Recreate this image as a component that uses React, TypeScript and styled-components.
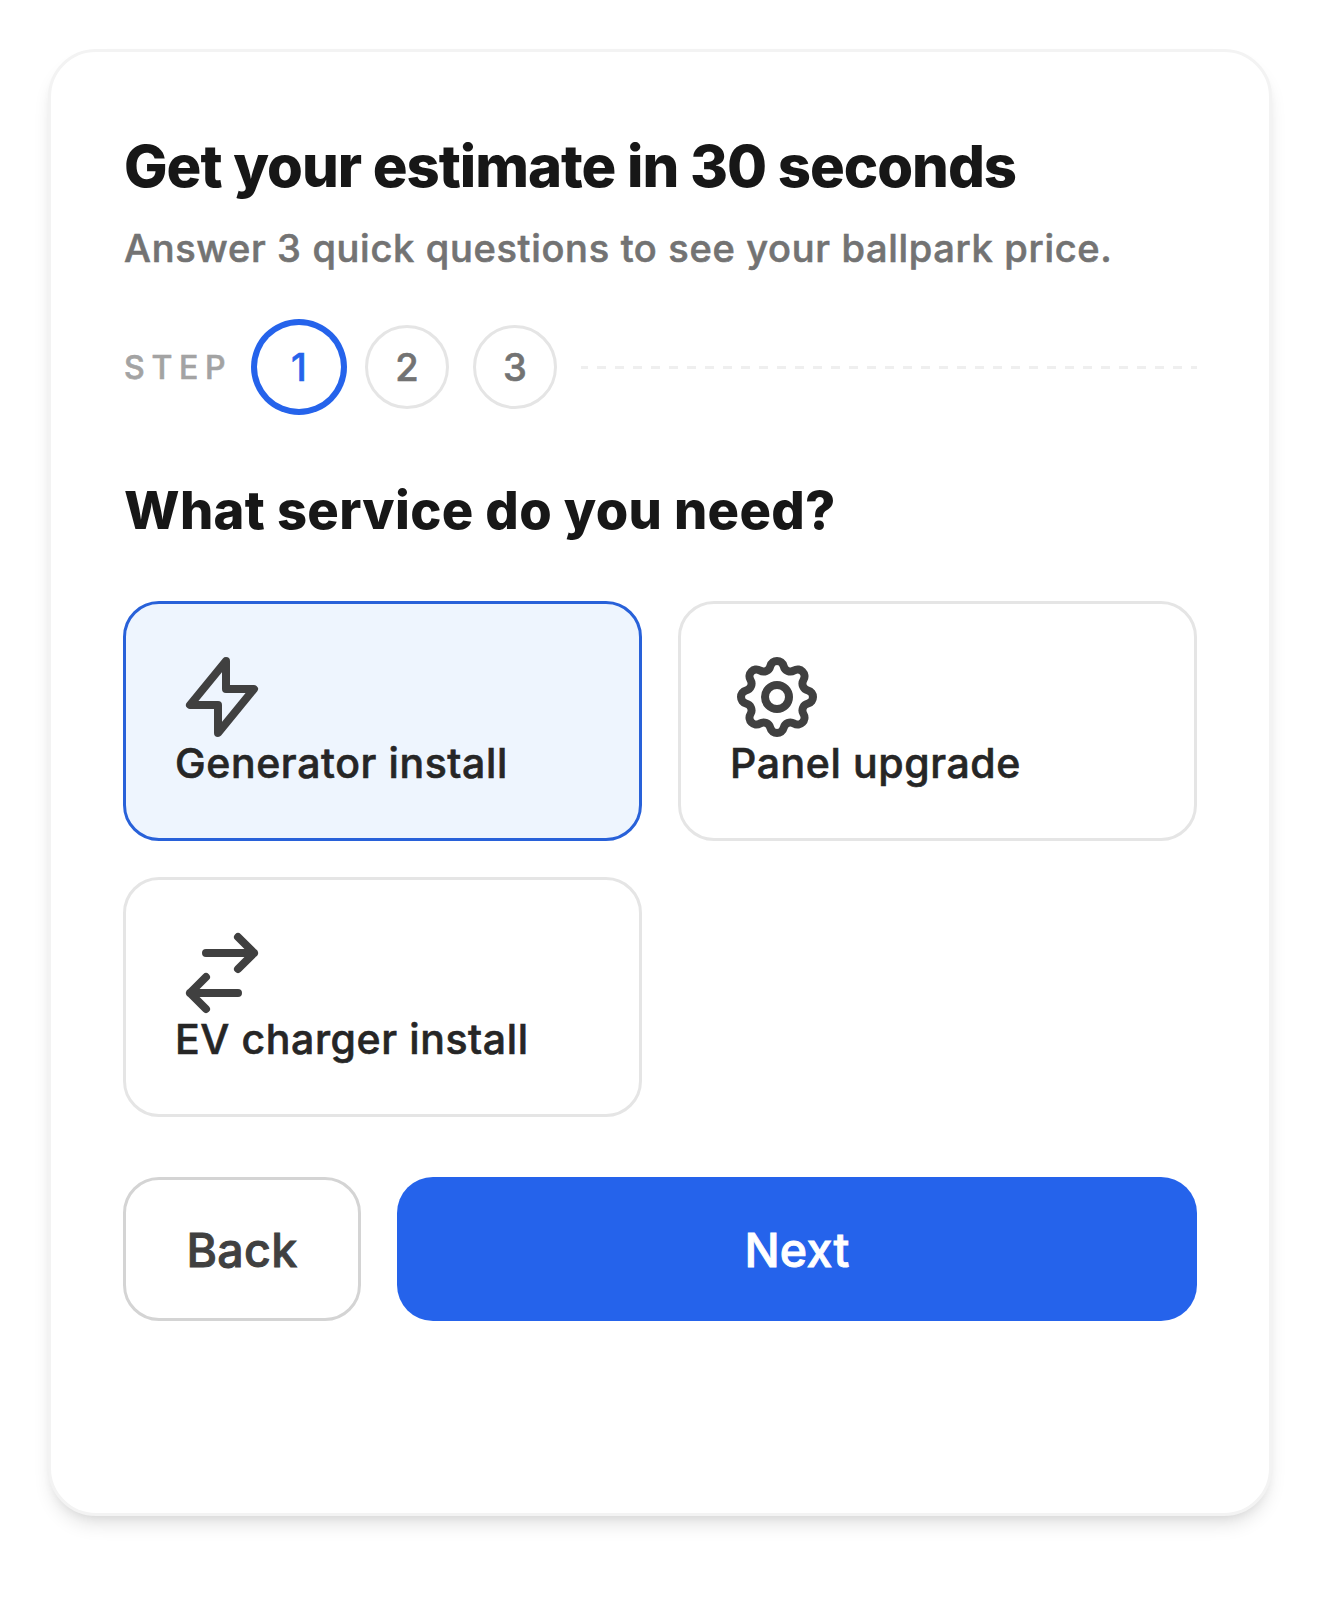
import React, { useState } from "react";
import styled, { createGlobalStyle } from "styled-components";

const GlobalStyle = createGlobalStyle`
  *, *::before, *::after { box-sizing: border-box; }
  body {
    margin: 0;
    background: #fff;
    font-family: Inter, "Liberation Sans", sans-serif;
    -webkit-font-smoothing: antialiased;
  }
  h1, h2, p { margin: 0; }
  button { font-family: inherit; cursor: pointer; }
`;

const Page = styled.main`
  min-height: 1607px;
  padding: 49px 48px 0;
`;

const Card = styled.section`
  display: flex;
  flex-direction: column;
  height: 1467px;
  padding: 72px;
  border: 3px solid #f3f3f3;
  border-radius: 48px;
  background: #fff;
  box-shadow: 0 12px 18px -3px rgba(0, 0, 0, 0.1), 0 6px 12px -6px rgba(0, 0, 0, 0.1);
`;

const Title = styled.h1`
  padding-left: 1px;
  font-size: 58px;
  line-height: 84px;
  font-weight: 800;
  letter-spacing: -0.0178em;
  color: #171717;
  white-space: nowrap;
`;

const Subtitle = styled.p`
  padding-left: 1px;
  margin-top: 10px;
  font-size: 38px;
  line-height: 60px;
  font-weight: 500;
  letter-spacing: 0.018em;
  -webkit-text-stroke: 0.6px currentColor;
  color: #737373;
  white-space: nowrap;
`;

const Steps = styled.div`
  display: flex;
  align-items: center;
  gap: 24px;
  height: 84px;
  margin-top: 47px;
`;

const StepLabel = styled.span`
  width: 110px;
  padding-left: 1px;
  font-size: 32px;
  font-weight: 500;
  letter-spacing: 0.21em;
  -webkit-text-stroke: 0.6px currentColor;
  color: #a3a3a3;
  white-space: nowrap;
`;

const StepDot = styled.span<{ $active: boolean }>`
  display: flex;
  align-items: center;
  justify-content: center;
  flex: none;
  width: 84px;
  height: 84px;
  border-radius: 50%;
  border: ${(p) => (p.$active ? "0" : "3px solid #e5e5e5")};
  box-shadow: ${(p) => (p.$active ? "0 0 0 6px #2563eb" : "none")};
  font-size: 38px;
  font-weight: 500;
  -webkit-text-stroke: 0.6px currentColor;
  color: ${(p) => (p.$active ? "#2563eb" : "#737373")};
`;

const StepLine = styled.span`
  flex: 1;
  height: 3px;
  background: repeating-linear-gradient(90deg, #efefef 0 9px, transparent 9px 18px);
  background-position: -2px 0;
`;

const Question = styled.h2`
  padding-left: 1px;
  margin-top: 65px;
  font-size: 52.5px;
  line-height: 72px;
  font-weight: 800;
  letter-spacing: 0.006em;
  color: #171717;
  white-space: nowrap;
`;

const Options = styled.div`
  display: grid;
  grid-template-columns: 1fr 1fr;
  grid-auto-rows: 240px;
  gap: 36px;
  margin-top: 55px;
`;

const Option = styled.button<{ $selected: boolean }>`
  display: flex;
  flex-direction: column;
  align-items: flex-start;
  padding: 45px 48px;
  border: 3px solid ${(p) => (p.$selected ? "#2861d9" : "#e5e5e5")};
  border-radius: 36px;
  background: ${(p) => (p.$selected ? "#eef5fe" : "#fff")};
`;

const OptionIcon = styled.svg`
  flex: none;
  width: 96px;
  height: 96px;
  fill: none;
  stroke: #404040;
  stroke-width: 2;
  stroke-linecap: round;
  stroke-linejoin: round;
`;

const OptionLabel = styled.span`
  padding-left: 1px;
  font-size: 41px;
  line-height: 36px;
  font-weight: 500;
  letter-spacing: 0.0145em;
  -webkit-text-stroke: 0.6px currentColor;
  color: #262626;
  white-space: nowrap;
`;

const Actions = styled.div`
  display: flex;
  gap: 36px;
  height: 144px;
  margin-top: 60px;
`;

const Action = styled.button<{ $primary?: boolean }>`
  flex: ${(p) => (p.$primary ? "1" : "0 0 238px")};
  padding: 1px 0 0;
  border: ${(p) => (p.$primary ? "0" : "3px solid #d4d4d4")};
  border-radius: 36px;
  background: ${(p) => (p.$primary ? "#2563eb" : "#fff")};
  color: ${(p) => (p.$primary ? "#fff" : "#404040")};
  font-size: 46.5px;
  font-weight: 500;
  letter-spacing: 0.006em;
  -webkit-text-stroke: 0.9px currentColor;
`;

const services = [
  { label: "Generator install", paths: ["M13 10V3L4 14h7v7l9-11h-7z"] },
  {
    label: "Panel upgrade",
    paths: [
      "M10.325 4.317c.426-1.756 2.924-1.756 3.35 0a1.724 1.724 0 002.573 1.066c1.543-.94 3.31.826 2.37 2.37a1.724 1.724 0 001.065 2.572c1.756.426 1.756 2.924 0 3.35a1.724 1.724 0 00-1.066 2.573c.94 1.543-.826 3.31-2.37 2.37a1.724 1.724 0 00-2.572 1.065c-.426 1.756-2.924 1.756-3.35 0a1.724 1.724 0 00-2.573-1.066c-1.543.94-3.31-.826-2.37-2.37a1.724 1.724 0 00-1.065-2.572c-1.756-.426-1.756-2.924 0-3.35a1.724 1.724 0 001.066-2.573c-.94-1.543.826-3.31 2.37-2.37.996.608 2.296.07 2.572-1.065z",
      "M15 12a3 3 0 11-6 0 3 3 0 016 0z",
    ],
  },
  {
    label: "EV charger install",
    paths: ["M8 7h12m0 0l-4-4m4 4l-4 4m0 6H4m0 0l4 4m-4-4l4-4"],
  },
];

export default function App() {
  const [selected, setSelected] = useState(0);
  return (
    <>
      <GlobalStyle />
      <Page>
        <Card>
          <Title>Get your estimate in 30 seconds</Title>
          <Subtitle>Answer 3 quick questions to see your ballpark price.</Subtitle>
          <Steps>
            <StepLabel>STEP</StepLabel>
            {[1, 2, 3].map((n) => (
              <StepDot key={n} $active={n === 1}>
                {n}
              </StepDot>
            ))}
            <StepLine />
          </Steps>
          <Question>What service do you need?</Question>
          <Options>
            {services.map((s, i) => (
              <Option key={s.label} $selected={i === selected} onClick={() => setSelected(i)}>
                <OptionIcon viewBox="0 0 24 24">
                  {s.paths.map((d) => (
                    <path key={d} d={d} />
                  ))}
                </OptionIcon>
                <OptionLabel>{s.label}</OptionLabel>
              </Option>
            ))}
          </Options>
          <Actions>
            <Action>Back</Action>
            <Action $primary>Next</Action>
          </Actions>
        </Card>
      </Page>
    </>
  );
}
